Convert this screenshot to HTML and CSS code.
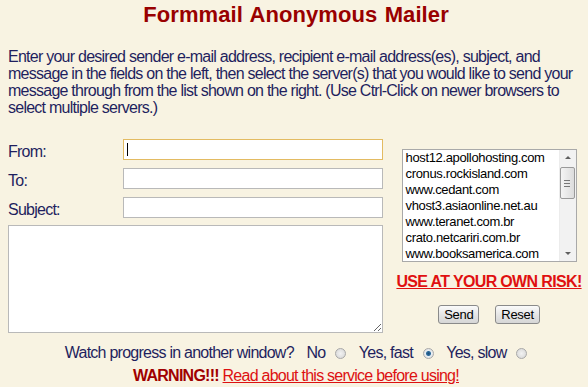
FILE: index.html
```html
<!DOCTYPE html>
<html lang="en">
<head>
    <meta charset="UTF-8">
    <title>Formmail Anonymous Mailer</title>
    <link rel="stylesheet" href="styles.css">
</head>
<body>
    <h1 class="title">Formmail Anonymous Mailer</h1>

    <p class="intro">Enter your desired sender e-mail address, recipient e-mail address(es), subject, and
    message in the fields on the left, then select the server(s) that you would like to send your
    message through from the list shown on the right. (Use Ctrl-Click on newer browsers to
    select multiple servers.)</p>

    <form class="mailer">
        <div class="mail-fields">
            <label class="field-label" for="from">From:</label>
            <span class="input-wrap">
                <input class="text-input focused" id="from" type="text">
                <span class="caret"></span>
            </span>

            <label class="field-label" for="to">To:</label>
            <input class="text-input" id="to" type="text">

            <label class="field-label" for="subject">Subject:</label>
            <input class="text-input" id="subject" type="text">

            <textarea class="message"></textarea>
        </div>

        <div class="server-side">
            <div class="listbox">
                <ul class="server-list">
                    <li>host12.apollohosting.com</li>
                    <li>cronus.rockisland.com</li>
                    <li>www.cedant.com</li>
                    <li>vhost3.asiaonline.net.au</li>
                    <li>www.teranet.com.br</li>
                    <li>crato.netcariri.com.br</li>
                    <li>www.booksamerica.com</li>
                </ul>
                <div class="scrollbar">
                    <div class="sb-arrow sb-up"></div>
                    <div class="sb-thumb"><span></span><span></span><span></span></div>
                    <div class="sb-track"></div>
                    <div class="sb-arrow sb-down"></div>
                </div>
            </div>

            <a class="risk" href="#">USE AT YOUR OWN RISK!</a>

            <div class="buttons">
                <button class="btn" type="button">Send</button>
                <button class="btn" type="reset">Reset</button>
            </div>
        </div>
    </form>

    <div class="progress">
        Watch progress in another window?
        <label class="opt">No <input class="radio" type="radio" name="watch"></label>
        <label class="opt">Yes, fast <input class="radio" type="radio" name="watch" checked></label>
        <label class="opt">Yes, slow <input class="radio" type="radio" name="watch"></label>
    </div>

    <div class="warning">
        <strong class="warn-word">WARNING!!!</strong> <a class="warn-link" href="#">Read about this service before using!</a>
    </div>
</body>
</html>
```

FILE: styles.css
```css
body {
    margin: 0;
    padding: 0 4px 0 8px;
    background: #f8f3e2;
    color: #1f1f5e;
    font-family: "Liberation Sans", Arial, sans-serif;
    font-size: 16px;
    letter-spacing: -0.75px;
}

.title {
    margin: 2px 0 0;
    font-size: 22px;
    line-height: 26px;
    letter-spacing: 0.1px;
    word-spacing: 1px;
    color: #990000;
    text-align: center;
}

.intro {
    margin: 20px 0 0;
    line-height: 17px;
}

.mailer {
    display: flex;
    margin-top: 23px;
}

.mail-fields {
    display: grid;
    grid-template-columns: 115px 260px;
    grid-template-rows: 21px 21px 21px 107px;
    row-gap: 8px;
}

.field-label {
    align-self: end;
    line-height: 17px;
}

.input-wrap {
    position: relative;
    display: block;
}

.text-input {
    box-sizing: border-box;
    width: 260px;
    height: 21px;
    margin: 0;
    padding: 0 3px;
    border: 1px solid #b9b9b9;
    background: #fff;
    outline: none;
}

.text-input.focused {
    border-color: #e3bb62;
}

.caret {
    position: absolute;
    left: 4px;
    top: 4px;
    width: 1px;
    height: 13px;
    background: #000;
}

.message {
    grid-column: 1 / 3;
    box-sizing: border-box;
    width: 375px;
    height: 108px;
    margin: -1px 0 0;
    border: 1px solid #b9b9b9;
    background: #fff;
    resize: both;
}

.server-side {
    display: flex;
    flex-direction: column;
    align-items: center;
    width: 190px;
    margin-left: 11px;
}

.listbox {
    display: flex;
    box-sizing: border-box;
    width: 175px;
    height: 113px;
    margin-top: 10px;
    border: 1px solid #a9a9a9;
    background: #fff;
}

.server-list {
    flex: 1;
    margin: 0;
    padding: 0 0 0 3px;
    list-style: none;
    font-size: 13px;
    line-height: 16px;
    letter-spacing: -0.35px;
    color: #000;
    white-space: nowrap;
    overflow: hidden;
}

.scrollbar {
    display: flex;
    flex-direction: column;
    width: 16px;
    background: #f2f2f2;
    border-left: 1px solid #ececec;
}

.sb-arrow {
    position: relative;
    height: 16px;
}

.sb-arrow::after {
    content: "";
    position: absolute;
    left: 5px;
    border-left: 3px solid transparent;
    border-right: 3px solid transparent;
}

.sb-up::after {
    top: 6px;
    border-bottom: 3px solid #606060;
}

.sb-down::after {
    top: 7px;
    border-top: 3px solid #606060;
}

.sb-thumb {
    display: flex;
    flex-direction: column;
    justify-content: center;
    align-items: center;
    gap: 2px;
    height: 30px;
    margin: 1px 1px 0 0;
    border: 1px solid #9a9a9a;
    border-radius: 2px;
    background: linear-gradient(to right, #f4f4f4, #dcdcdc);
}

.sb-thumb span {
    width: 6px;
    height: 1px;
    background: #777;
}

.sb-track {
    flex: 1;
}

.risk {
    margin-top: 10px;
    font-size: 16px;
    font-weight: bold;
    line-height: 20px;
    letter-spacing: -0.65px;
    color: #e01010;
}

.buttons {
    display: flex;
    gap: 16px;
    margin-top: 13px;
}

.btn {
    height: 19px;
    padding: 0 5px;
    border: 1px solid #8a8a8a;
    border-radius: 3px;
    background: linear-gradient(#fbfbfb, #e4e4e4 55%, #d6d6d6);
    font-family: "Liberation Sans", Arial, sans-serif;
    font-size: 13px;
    letter-spacing: -0.3px;
    color: #000;
}

.progress,
.warning {
    text-align: center;
    line-height: 23px;
}

.progress {
    margin-top: 8px;
}

.opt {
    margin-left: 9px;
}

.radio {
    appearance: none;
    box-sizing: border-box;
    width: 11px;
    height: 11px;
    margin: 0 0 0 6px;
    vertical-align: -1px;
    border: 1px solid #a8a8a8;
    border-radius: 50%;
    background: radial-gradient(circle, #f2f2f2, #d4d4d4);
}

.radio:checked {
    background: radial-gradient(circle, #1d4f7a 0, #2d6b9c 2px, #e9eef2 3px, #d7d7d7 100%);
}

.warn-word {
    color: #a00000;
}

.warn-link {
    color: #dd1111;
}
```
